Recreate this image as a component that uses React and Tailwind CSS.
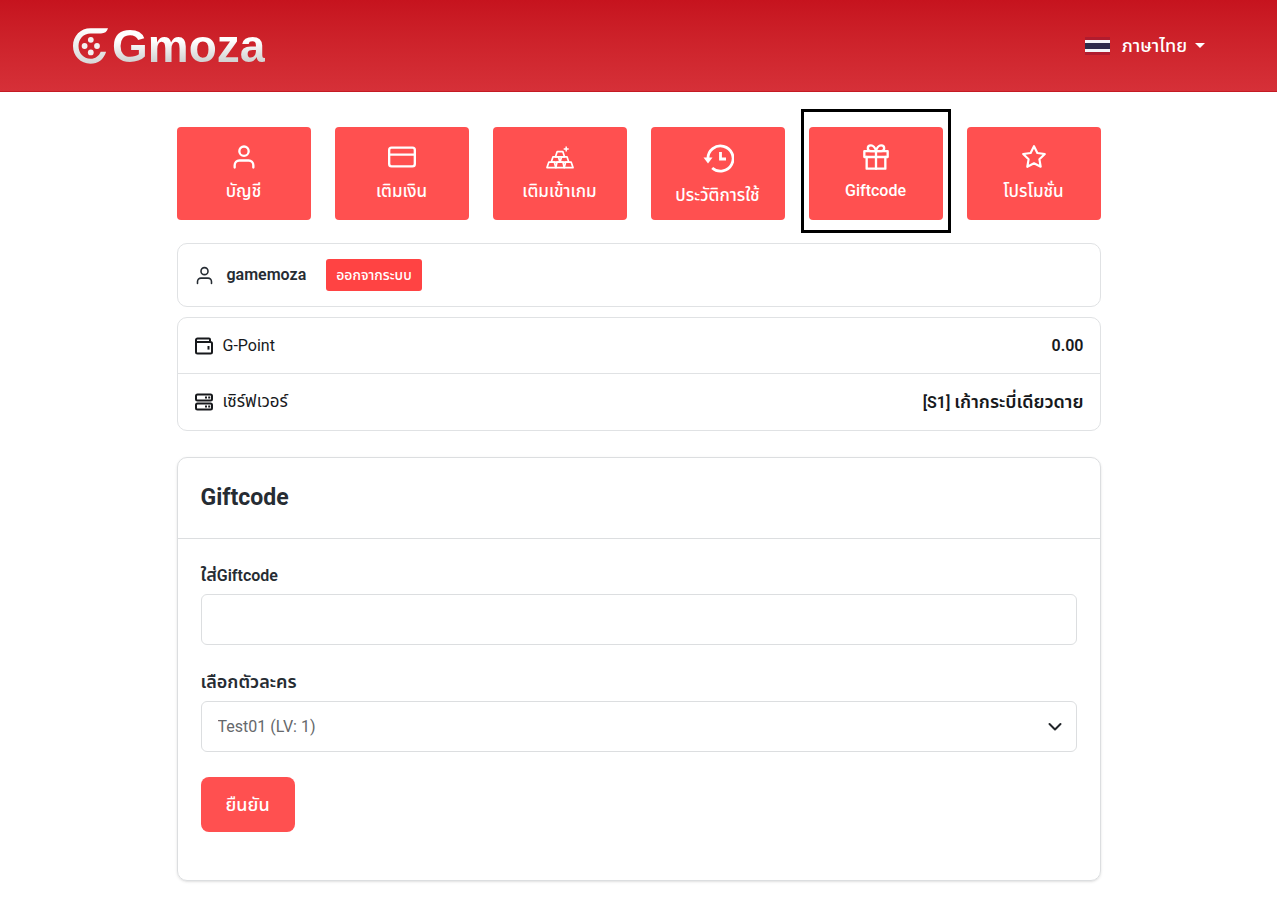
import React, { useState } from 'react';
import { FiUser, FiCreditCard, FiGift, FiStar } from 'react-icons/fi';

const GoldIcon = ({ className }) => (
  <svg className={className} viewBox="0 0 28 28" fill="none" stroke="currentColor" strokeWidth="1.7" strokeLinejoin="round">
    <path d="M11.2 8.600h5.600l1.700 5.200h-9z" />
    <path d="M7 13.800h5.400l1.600 5.400H5.200z" />
    <path d="M15.600 13.800H21l1.800 5.400H14z" />
    <path d="M2.800 19.200h5.600l1.400 5.400H1z" />
    <path d="M11 19.200h6l1.200 5.400H9.800z" />
    <path d="M19.600 19.200h5.600l1.800 5.400h-8.800z" />
    <path d="M20.200 3.600v5M17.700 6.100h5" strokeWidth="1.5" />
  </svg>
);

const HistoryIcon = ({ className }) => (
  <svg className={className} viewBox="0 0 32 32" fill="none" stroke="currentColor">
    <path d="M5.900 15.500A12.600 12.600 0 1 1 10.200 25" strokeWidth="2.8" />
    <path d="M1.500 14.500h9L6 20.500z" fill="currentColor" stroke="none" />
    <path d="M18.500 9v7h5.500" strokeWidth="2.800" />
  </svg>
);

const WalletIcon = ({ className }) => (
  <svg className={className} viewBox="0 0 18 18" fill="none" stroke="currentColor" strokeWidth="2" strokeLinejoin="round">
    <path d="M1 4V15a1.500 1.500 0 0 0 1.500 1.500h13A1.500 1.500 0 0 0 17 15V6.500A1.500 1.500 0 0 0 15.500 5H2A1 1 0 0 1 1 4V3a1.500 1.500 0 0 1 1.500-1.500H14a1 1 0 0 1 1 1V5" />
    <path d="M13.500 9v3.600" />
  </svg>
);

const ServerIcon = ({ className }) => (
  <svg className={className} viewBox="0 0 18 18" fill="none" stroke="currentColor" strokeWidth="2">
    <rect x="1" y="1.500" width="16" height="6" rx="1.500" />
    <rect x="1" y="10.500" width="16" height="6" rx="1.500" />
    <path d="M10 4.500h2M13.200 4.500h2M10 13.500h2M13.200 13.500h2" strokeWidth="1.800" />
  </svg>
);

const navigation = [
  { name: 'บัญชี', path: '#account', icon: FiUser, size: 'size-7' },
  { name: 'เติมเงิน', path: '#topup', icon: FiCreditCard, size: 'size-7' },
  { name: 'เติมเข้าเกม', path: '#game', icon: GoldIcon, size: 'size-7' },
  { name: 'ประวัติการใช้', path: '#history', icon: HistoryIcon, size: 'size-8' },
  { name: 'Giftcode', path: '#giftcode', icon: FiGift, size: 'size-7', latin: true },
  { name: 'โปรโมชั่น', path: '#promotion', icon: FiStar, size: 'my-px size-[26px]' },
];

const Logo = () => (
  <a href="#home" className="flex items-center">
    <svg className="h-9 w-9" viewBox="0 0 36 36" fill="none" aria-hidden="true">
      <defs>
        <linearGradient id="silver" x1="0" y1="0" x2="0" y2="1">
          <stop offset="0" stopColor="#ffffff" />
          <stop offset="1" stopColor="#d8d8d8" />
        </linearGradient>
      </defs>
      <path
        d="M36 .3H18.500C8.500.3 1 8 1 18s7.500 17.700 17.500 17.700c7.500 0 13.300-4.300 15.600-12h-5.400c-1.700 4.300-5.300 7-10.200 7-6.900 0-12-5.500-12-12.700s5.100-12.500 12-12.500H29c3.700 0 6-1.800 7-5.200z"
        fill="url(#silver)"
      />
      <g fill="#f4f0f0">
        <circle cx="18.800" cy="11.800" r="2.900" />
        <circle cx="12.600" cy="18" r="2.900" />
        <circle cx="25" cy="18" r="2.900" />
        <circle cx="18.800" cy="24.400" r="2.900" />
      </g>
    </svg>
    <span className="ml-1 bg-linear-to-b from-white from-40% to-[#d0d0d0] to-80% bg-clip-text font-['Liberation_Sans',sans-serif] text-[46px] leading-[54px] font-bold text-transparent">
      Gmoza
    </span>
  </a>
);

const Header = () => (
  <header className="flex h-[92px] items-center justify-between border-b border-[#c41a24] bg-linear-to-b from-[#c6131e] to-[#d63038] px-[72px]">
    <Logo />
    <button className="flex items-center text-lg font-medium text-white">
      <svg className="h-[18px] w-[25px]" viewBox="0 0 25 18" aria-hidden="true">
        <rect width="25" height="18" fill="#b01c2e" />
        <rect y="3" width="25" height="12" fill="#f4f5f8" />
        <rect y="6" width="25" height="6" fill="#2d2a4a" />
      </svg>
      <span className="ml-3">ภาษาไทย</span>
      <svg className="ml-2 h-[5px] w-[10px]" viewBox="0 0 10 5" fill="currentColor" aria-hidden="true">
        <path d="M0 0h10L5 5z" />
      </svg>
    </button>
  </header>
);

const NavTiles = ({ active }) => (
  <nav className="grid grid-cols-6 gap-6">
    {navigation.map((item) => {
      const Icon = item.icon;
      return (
        <a
          key={item.path}
          href={item.path}
          className="relative flex h-[93px] flex-col items-center rounded bg-[#ff5050] pt-4 font-medium text-white"
        >
          <Icon className={item.size} />
          <span className={`mt-2 leading-6 whitespace-nowrap ${item.latin ? 'text-base' : 'text-[17px]'}`}>
            {item.name}
          </span>
          {item.path === active && (
            <span className="absolute -inset-x-2 -top-[18px] -bottom-[13px] border-3 border-black" />
          )}
        </a>
      );
    })}
  </nav>
);

const AccountInfo = () => (
  <>
    <section className="mt-[23px] flex h-16 items-center rounded-[10px] border border-[#e0e2e4] px-4">
      <FiUser className="size-[21px]" strokeWidth={1.8} />
      <span className="ml-3 font-semibold">gamemoza</span>
      <button className="ml-5 h-8 rounded-[3px] bg-[#ff4343] px-[10px] text-sm font-medium text-white">ออกจากระบบ</button>
    </section>
    <section className="mt-[10px] divide-y divide-[#e0e2e4] rounded-[10px] border border-[#e0e2e4] text-[#17191c]">
      <div className="flex h-14 items-center px-4">
        <WalletIcon className="ml-px size-[18px]" />
        <span className="ml-[10px]">G-Point</span>
        <span className="ml-auto font-semibold">0.00</span>
      </div>
      <div className="flex h-14 items-center px-4">
        <ServerIcon className="ml-px size-[18px]" />
        <span className="ml-[10px] text-[17px]">เซิร์ฟเวอร์</span>
        <span className="ml-auto font-semibold">
          [S1] <span className="text-lg">เก้ากระบี่เดียวดาย</span>
        </span>
      </div>
    </section>
  </>
);

const GiftcodeForm = () => {
  const [code, setCode] = useState('');

  return (
    <section className="mt-[26px] rounded-[10px] border border-[#dcdee0] shadow-sm">
      <h1 className="border-b border-[#dcdee0] px-[23px] py-6 text-[23px] leading-8 font-bold">Giftcode</h1>
      <form className="px-[23px] pt-6 pb-12" onSubmit={(e) => e.preventDefault()}>
        <label htmlFor="code" className="block h-6 leading-6 font-semibold">
          <span className="text-lg leading-6">ใส่</span>Giftcode
        </label>
        <input
          id="code"
          value={code}
          onChange={(e) => setCode(e.target.value)}
          className="mt-[7px] block h-[51px] w-full rounded-md border border-[#dcdee0] px-4"
        />
        <label htmlFor="character" className="mt-[25px] block h-6 text-lg leading-6 font-semibold">เลือกตัวละคร</label>
        <div className="relative mt-[7px]">
          <select
            id="character"
            className="block h-[51px] w-full appearance-none rounded-md border border-[#dcdee0] bg-white px-4 text-base text-[#65686b]"
          >
            <option>Test01 (LV: 1)</option>
          </select>
          <svg
            className="pointer-events-none absolute top-[18px] right-[14px] size-4"
            viewBox="0 0 16 16"
            fill="none"
            stroke="#212529"
            strokeWidth="2"
            strokeLinecap="round"
            strokeLinejoin="round"
          >
            <path d="m2.500 5 5.500 5.500L13.500 5" />
          </svg>
        </div>
        <button className="mt-[25px] h-[55px] rounded-lg bg-[#ff5050] px-[25px] text-lg font-medium text-white">ยืนยัน</button>
      </form>
    </section>
  );
};

const App = () => {
  return (
    <div className="min-h-screen bg-white font-['Roboto','Noto_Sans_Thai','Noto_Sans',sans-serif] text-base text-[#262c33]">
      <Header />
      <main className="mx-auto max-w-[924px] pt-[35px] pb-4">
        <NavTiles active="#giftcode" />
        <AccountInfo />
        <GiftcodeForm />
      </main>
    </div>
  );
};

export default App;
